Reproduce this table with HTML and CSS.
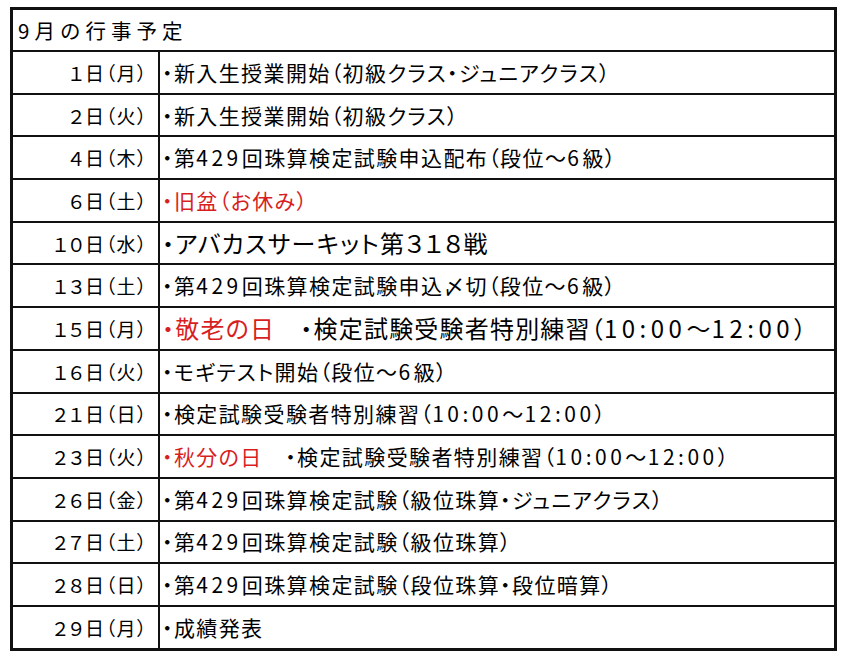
FILE: index.html
```html
<!DOCTYPE html>
<html lang="ja">
<head>
<meta charset="utf-8">
<link rel="stylesheet" href="styles.css">
</head>
<body>
<table class="sched">
  <tr><th colspan="2" class="title">9月の行事予定</th></tr>
  <tr><td class="d">１日（月）</td><td class="e">・新入生授業開始（初級クラス・ジュニアクラス）</td></tr>
  <tr><td class="d">２日（火）</td><td class="e">・新入生授業開始（初級クラス）</td></tr>
  <tr><td class="d">４日（木）</td><td class="e">・第<span class="n">429</span>回珠算検定試験申込配布（段位～<span class="n">6</span>級）</td></tr>
  <tr><td class="d">６日（土）</td><td class="e red">・旧盆（お休み）</td></tr>
  <tr><td class="d">１０日（水）</td><td class="e big">・アバカスサーキット第３１８戦</td></tr>
  <tr><td class="d">１３日（土）</td><td class="e">・第<span class="n">429</span>回珠算検定試験申込〆切（段位～<span class="n">6</span>級）</td></tr>
  <tr><td class="d">１５日（月）</td><td class="e big"><span class="red">・敬老の日</span>　・検定試験受験者特別練習（<span class="n">10:00</span>～<span class="n">12:00</span>）</td></tr>
  <tr><td class="d">１６日（火）</td><td class="e">・モギテスト開始（段位～<span class="n">6</span>級）</td></tr>
  <tr><td class="d">２１日（日）</td><td class="e">・検定試験受験者特別練習（<span class="n">10:00</span>～<span class="n">12:00</span>）</td></tr>
  <tr><td class="d">２３日（火）</td><td class="e"><span class="red">・秋分の日</span>　・検定試験受験者特別練習（<span class="n">10:00</span>～<span class="n">12:00</span>）</td></tr>
  <tr><td class="d">２６日（金）</td><td class="e">・第<span class="n">429</span>回珠算検定試験（級位珠算・ジュニアクラス）</td></tr>
  <tr><td class="d">２７日（土）</td><td class="e">・第<span class="n">429</span>回珠算検定試験（級位珠算）</td></tr>
  <tr><td class="d">２８日（日）</td><td class="e">・第<span class="n">429</span>回珠算検定試験（段位珠算・段位暗算）</td></tr>
  <tr><td class="d">２９日（月）</td><td class="e">・成績発表</td></tr>
</table>
</body>
</html>
```
FILE: styles.css
```css
html, body { margin: 0; padding: 0; background: #fff; }
body { padding: 7px 0 0 10px; font-family: "Noto Sans CJK JP", sans-serif; color: #000; }
.sched {
  border-collapse: collapse;
  width: 827px;
  border: 3px solid #111;
}
.sched th, .sched td {
  border: 2px solid #111;
  height: 40.7px;
  padding: 0;
  font-size: 19.5px;
  font-weight: normal;
  line-height: 1;
  white-space: nowrap;
}
.sched th { height: 40px; }
.title { text-align: left; padding-left: 5px !important; font-size: 20.5px !important; letter-spacing: 5px; }
.d { width: 135px; text-align: right; padding-right: 10px !important; letter-spacing: 1.5px; font-size: 19px !important; font-feature-settings: "palt"; }
.e {
  text-align: left;
  padding-left: 2px !important;
  font-size: 21px !important;
  letter-spacing: 1.4px;
  font-feature-settings: "palt";
}
.n { letter-spacing: 3.5px; }
.big { font-size: 24px !important; letter-spacing: 1.2px; }
.big .n { letter-spacing: 4.5px; }
.red { color: #d81e1e; }
```
